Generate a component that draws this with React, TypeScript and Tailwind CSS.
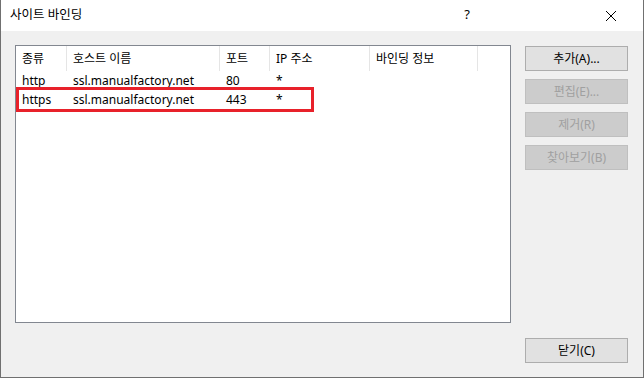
import React from 'react';

const COLUMNS = [
  { label: "종류", width: "w-[51px]" },
  { label: "호스트 이름", width: "w-[153px]" },
  { label: "포트", width: "w-[50px]" },
  { label: "IP 주소", width: "w-[100px]" },
  { label: "바인딩 정보", width: "w-[108px]" },
];

const ROWS = [
  ["http", "ssl.manualfactory.net", "80", "*", ""],
  ["https", "ssl.manualfactory.net", "443", "*", ""],
];

const SIDE_BUTTONS = [
  { label: "추가(A)...", enabled: true },
  { label: "편집(E)...", enabled: false },
  { label: "제거(R)", enabled: false },
  { label: "찾아보기(B)", enabled: false },
];

const font = "font-['Segoe_UI','Noto_Sans','Noto_Sans_CJK_KR',sans-serif]";

const DialogButton = ({ label, enabled = true }: { label: string; enabled?: boolean }) => (
  <div
    className={
      enabled
        ? "h-[25px] w-[103px] border border-[#adadad] bg-[#e1e1e1] text-[12px] text-black flex items-center justify-center"
        : "h-[25px] w-[103px] border border-[#bfbfbf] bg-[#cccccc] text-[12px] text-[#a0a0a0] flex items-center justify-center"
    }
  >
    {label}
  </div>
);

export default function App() {
  return (
    <div className={`w-[644px] h-[378px] bg-[#f0f0f0] border-x border-b border-[#707070] flex flex-col ${font}`}>
      {/* title bar */}
      <div className="h-[31px] bg-white flex items-center text-[12px] text-black">
        <span className="ml-[9px] flex-1 text-[12.5px]">사이트 바인딩</span>
        <span className="w-[20px] text-center mr-[128px] -mt-[1px] text-[13px]">?</span>
        <svg width="12" height="12" viewBox="0 0 12 12" className="mr-[26px]">
          <path d="M1 1L11 11M11 1L1 11" stroke="#000" strokeWidth="1" />
        </svg>
      </div>

      <div className="flex pl-[14px] pt-[14px] pr-[15px]">
        {/* list view */}
        <div className="relative w-[496px] h-[278px] bg-white border border-[#828790] text-[12px] text-black">
          <div className="flex h-[25px]">
            {COLUMNS.map((c, i) => (
              <div key={i} className={`${c.width} h-full border-r border-[#e5e5e5] pl-[6px] flex items-center`}>
                {c.label}
              </div>
            ))}
          </div>
          {ROWS.map((r, i) => (
            <div key={i} className="flex h-[19px]">
              {r.map((cell, j) => (
                <div key={j} className={`${COLUMNS[j].width} pl-[6px] flex items-center`}>
                  {cell}
                </div>
              ))}
            </div>
          ))}
          <div className="absolute left-0 top-[41px] w-[298px] h-[25px] border-[3px] border-[#e8212a]" />
        </div>

        {/* side buttons */}
        <div className="ml-[14px] mt-[1px] flex flex-col gap-[8px]">
          {SIDE_BUTTONS.map((b, i) => (
            <DialogButton key={i} label={b.label} enabled={b.enabled} />
          ))}
        </div>
      </div>

      <div className="flex justify-end pr-[15px] mt-[15px]">
        <DialogButton label="닫기(C)" />
      </div>
    </div>
  );
}
